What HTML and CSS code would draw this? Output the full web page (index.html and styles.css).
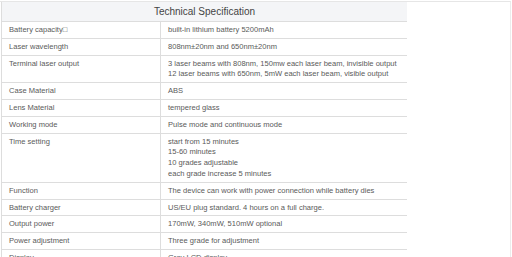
FILE: index.html
```html
<!DOCTYPE html>
<html>
<head>
<meta charset="utf-8">
<link rel="stylesheet" href="styles.css">
</head>
<body>
<div class="frame">
  <table class="spec">
    <colgroup><col class="c1"><col class="c2"></colgroup>
    <thead>
      <tr><th colspan="2">Technical Specification</th></tr>
    </thead>
    <tbody>
      <tr><td>Battery capacity□</td><td>built-in lithium battery 5200mAh</td></tr>
      <tr><td>Laser wavelength</td><td>808nm±20nm and 650nm±20nm</td></tr>
      <tr><td>Terminal laser output</td><td>3 laser beams with 808nm, 150mw each laser beam, invisible output<br>12 laser beams with 650nm, 5mW each laser beam, visible output</td></tr>
      <tr><td>Case Material</td><td>ABS</td></tr>
      <tr><td>Lens Material</td><td>tempered glass</td></tr>
      <tr><td>Working mode</td><td>Pulse mode and continuous mode</td></tr>
      <tr><td>Time setting</td><td>start from 15 minutes<br>15-60 minutes<br>10 grades adjustable<br>each grade increase 5 minutes</td></tr>
      <tr><td>Function</td><td>The device can work with power connection while battery dies</td></tr>
      <tr><td>Battery charger</td><td>US/EU plug standard. 4 hours on a full charge.</td></tr>
      <tr><td>Output power</td><td>170mW, 340mW, 510mW optional</td></tr>
      <tr><td>Power adjustment</td><td>Three grade for adjustment</td></tr>
      <tr><td>Display</td><td>Gray LCD display</td></tr>
    </tbody>
  </table>
</div>
</body>
</html>
```

FILE: styles.css
```css
html, body {
  margin: 0;
  padding: 0;
  background: #ffffff;
}
body {
  font-family: "Liberation Sans", Arial, sans-serif;
  color: #5a5a5a;
  overflow: hidden;
  height: 257px;
}
.frame {
  width: 509px;
  height: 300px;
  border-top: 1px solid #e6e6e6;
  border-right: 1px solid #ececec;
  margin-top: 1px;
  padding-left: 1px;
}
.spec {
  border-collapse: collapse;
  width: 406px;
  table-layout: fixed;
}
.spec .c1 {
  width: 159px;
}
.spec th {
  background: #f4f5f7;
  color: #444444;
  font-weight: normal;
  font-size: 10px;
  line-height: 14px;
  padding: 3px 4px 2px 4px;
  border: 1px solid #dddddd;
  border-top: none;
  border-right: none;
  text-align: center;
}
.spec td {
  font-size: 7.55px;
  line-height: 10.8px;
  padding: 3px 6px 2px 7px;
  border: 1px solid #dddddd;
  vertical-align: top;
  white-space: nowrap;
  overflow: hidden;
}
.spec td:last-child {
  border-right: none;
}
```
